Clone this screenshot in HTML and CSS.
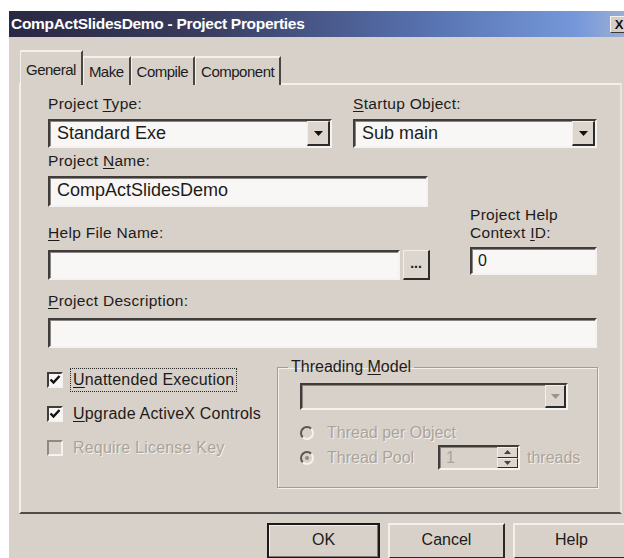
FILE: index.html
```html
<!DOCTYPE html>
<html lang="en">
<head>
<meta charset="utf-8">
<title>CompActSlidesDemo - Project Properties</title>
<link rel="stylesheet" href="styles.css">
</head>
<body>
<div class="dialog">
  <div class="titlebar">
    <span class="title">CompActSlidesDemo - Project Properties</span>
    <span class="close">X</span>
  </div>
  <div class="dialog-body">
    <div class="tabs">
      <div class="tab active">General</div>
      <div class="tab">Make</div>
      <div class="tab">Compile</div>
      <div class="tab">Component</div>
    </div>
    <div class="panel">
      <div class="row-top">
        <div class="field field-type">
          <div class="label">Project <u>T</u>ype:</div>
          <div class="combo">
            <span class="value">Standard Exe</span>
            <span class="drop"><svg width="9" height="5" viewBox="0 0 9 5"><path d="M0 0H9L4.5 5Z" fill="#111"/></svg></span>
          </div>
        </div>
        <div class="field field-startup">
          <div class="label"><u>S</u>tartup Object:</div>
          <div class="combo">
            <span class="value">Sub main</span>
            <span class="drop"><svg width="9" height="5" viewBox="0 0 9 5"><path d="M0 0H9L4.5 5Z" fill="#111"/></svg></span>
          </div>
        </div>
      </div>

      <div class="row-mid">
        <div class="col-left">
          <div class="label">Project <u>N</u>ame:</div>
          <div class="textbox name">CompActSlidesDemo</div>
          <div class="label help-label"><u>H</u>elp File Name:</div>
          <div class="file-row">
            <div class="textbox file"></div>
            <div class="browse">...</div>
          </div>
        </div>
        <div class="col-right">
          <div class="label">Project Help<br>Context <u>I</u>D:</div>
          <div class="textbox ctx">0</div>
        </div>
      </div>

      <div class="label desc-label"><u>P</u>roject Description:</div>
      <div class="textbox desc"></div>

      <div class="row-bottom">
        <div class="checks">
          <div class="check">
            <span class="box"><svg width="12" height="12" viewBox="0 0 12 12"><path d="M1.5 5.5L4.5 8.5L10.5 2" fill="none" stroke="#111" stroke-width="2.4"/></svg></span>
            <span class="check-text focus"><u>U</u>nattended Execution</span>
          </div>
          <div class="check">
            <span class="box"><svg width="12" height="12" viewBox="0 0 12 12"><path d="M1.5 5.5L4.5 8.5L10.5 2" fill="none" stroke="#111" stroke-width="2.4"/></svg></span>
            <span class="check-text"><u>U</u>pgrade ActiveX Controls</span>
          </div>
          <div class="check disabled">
            <span class="box"></span>
            <span class="check-text">Require License Key</span>
          </div>
        </div>

        <fieldset class="threading">
          <legend>Threading <u>M</u>odel</legend>
          <div class="combo combo-disabled">
            <span class="value"></span>
            <span class="drop"><svg width="9" height="5" viewBox="0 0 9 5"><path d="M0 0H9L4.5 5Z" fill="#9a948d"/></svg></span>
          </div>
          <div class="radio-row first">
            <span class="radio"></span>
            <span class="dis-text">Thread per Object</span>
          </div>
          <div class="radio-row">
            <span class="radio checked"><span class="dot"></span></span>
            <span class="dis-text pool">Thread Pool</span>
            <div class="spin">
              <span class="spin-value">1</span>
              <span class="spin-btns">
                <span class="spin-btn"><svg width="7" height="4" viewBox="0 0 7 4"><path d="M0 4H7L3.5 0Z" fill="#444"/></svg></span>
                <span class="spin-btn"><svg width="7" height="4" viewBox="0 0 7 4"><path d="M0 0H7L3.5 4Z" fill="#444"/></svg></span>
              </span>
            </div>
            <span class="dis-text">threads</span>
          </div>
        </fieldset>
      </div>
    </div>

    <div class="buttons">
      <div class="btn default">OK</div>
      <div class="btn">Cancel</div>
      <div class="btn">Help</div>
    </div>
  </div>
</div>
</body>
</html>
```

FILE: styles.css
```css
* {
  box-sizing: border-box;
}

html,
body {
  margin: 0;
  padding: 0;
  background: #ffffff;
  overflow: hidden;
}

body {
  width: 624px;
  height: 558px;
  font-family: "Liberation Sans", Arial, sans-serif;
  color: #1d1b1a;
}

u {
  text-decoration-thickness: 1px;
  text-underline-offset: 2px;
}

/* window frame */
.dialog {
  margin: 11px 0 0 9px;
  width: 631px;
  height: 560px;
  background: #d8d1c9;
}

.titlebar {
  height: 26px;
  display: flex;
  align-items: center;
  padding: 0 12px 0 2px;
  background: linear-gradient(to right, #2a2943 0%, #383b5c 30%, #5670ad 65%, #7598da 90%, #a7b6d2 100%);
}

.title {
  color: #ffffff;
  font-weight: bold;
  font-size: 15.5px;
  letter-spacing: -0.3px;
}

.close {
  margin-left: auto;
  width: 18px;
  height: 17px;
  background: #d4cec8;
  border: 1px solid;
  border-color: #f4f1ee #3a3836 #3a3836 #f4f1ee;
  font-weight: bold;
  font-size: 13px;
  line-height: 15px;
  text-align: center;
  color: #111;
}

.dialog-body {
  padding: 13px 0 0 10px;
}

/* tab strip */
.tabs {
  display: flex;
  align-items: flex-end;
  height: 35px;
  margin-bottom: -2px;
  padding-left: 1px;
}

.tab {
  height: 29px;
  padding: 5px 5px 0 5px;
  font-size: 15px;
  letter-spacing: -0.5px;
  border-top: 2px solid #f3efeb;
  border-left: 1px solid #f3efeb;
  border-right: 2px solid #4a4643;
  background: #d8d1c9;
}

.tab.active {
  height: 35px;
  padding-top: 9px;
  position: relative;
  z-index: 1;
}

/* tab page */
.panel {
  width: 603px;
  height: 431px;
  padding: 10px 0 0 27px;
  border-top: 2px solid #f3efeb;
  border-left: 2px solid #f3efeb;
  border-right: 2px solid #e9e4de;
  border-bottom: 2px solid #4f4b48;
}

.label {
  font-size: 15.5px;
  line-height: 18px;
  letter-spacing: 0.3px;
}

.row-top {
  display: flex;
  gap: 21px;
}

.field-type {
  width: 284px;
}

.field-startup {
  width: 244px;
}

.field .label {
  margin-bottom: 6px;
}

/* sunken controls */
.combo,
.textbox,
.spin {
  background: #f8f7f5;
  border: 2px solid;
  border-color: #3f3c3a #f5f2ef #f5f2ef #3f3c3a;
  box-shadow: inset 1px 1px 0 #8a8580;
}

.combo {
  height: 29px;
  display: flex;
  align-items: stretch;
  padding-left: 7px;
}

.combo .value {
  flex: 1;
  font-size: 18px;
  line-height: 25px;
}

.drop {
  width: 23px;
  display: flex;
  align-items: center;
  justify-content: center;
  background: #dcd6cf;
  border: 1px solid;
  border-color: #f2eeea #2e2c2a #2e2c2a #f2eeea;
  border-right-width: 2px;
  border-bottom-width: 2px;
}

.textbox {
  font-size: 18px;
  line-height: 25px;
  padding-left: 7px;
}

.row-mid {
  display: flex;
  align-items: flex-end;
  margin-top: 4px;
}

.col-left {
  width: 382px;
}

.textbox.name {
  margin-top: 6px;
  height: 31px;
  width: 380px;
}

.help-label {
  margin-top: 17px;
}

.file-row {
  display: flex;
  gap: 3px;
  margin-top: 8px;
}

.textbox.file {
  width: 352px;
  height: 30px;
}

.browse {
  width: 27px;
  height: 30px;
  background: #dcd6cf;
  border: 1px solid;
  border-color: #f2eeea #2e2c2a #2e2c2a #f2eeea;
  border-right-width: 2px;
  border-bottom-width: 2px;
  font-size: 14px;
  font-weight: bold;
  line-height: 24px;
  text-align: center;
}

.col-right {
  width: 127px;
  margin-left: 40px;
  margin-bottom: 5px;
}

.textbox.ctx {
  margin-top: 5px;
  height: 28px;
  font-size: 16px;
  line-height: 24px;
  padding-left: 6px;
}

.desc-label {
  margin-top: 12px;
}

.textbox.desc {
  margin-top: 8px;
  width: 549px;
  height: 30px;
}

/* check boxes and threading group */
.row-bottom {
  display: flex;
  margin-top: 10px;
}

.checks {
  width: 229px;
  padding-top: 10px;
  display: flex;
  flex-direction: column;
  gap: 10px;
  margin-left: -1px;
}

.check {
  display: flex;
  align-items: center;
  height: 24px;
  font-size: 16px;
  letter-spacing: 0.2px;
}

.box {
  width: 16px;
  height: 16px;
  margin-right: 10px;
  background: #f8f7f5;
  border: 2px solid;
  border-color: #3f3c3a #f5f2ef #f5f2ef #3f3c3a;
  display: flex;
  align-items: center;
  justify-content: center;
}

.check-text.focus {
  outline: 1px dotted #2a2826;
  outline-offset: 2px;
}

.check.disabled .box {
  background: #d8d1c9;
  border-color: #8d8882 #f5f2ef #f5f2ef #8d8882;
}

.check.disabled .check-text,
.dis-text {
  color: #aaa39b;
  text-shadow: 1px 1px 0 #f4f0ec;
}

.threading {
  width: 321px;
  height: 130px;
  margin: 0 0 0 1px;
  padding: 0 0 0 22px;
  border: 1px solid #a29c95;
  box-shadow: 1px 1px 0 #f4f0ec, inset 1px 1px 0 #f4f0ec;
}

.threading legend {
  margin-left: -12px;
  padding: 0 3px;
  font-size: 16px;
  line-height: 18px;
}

.combo-disabled {
  width: 268px;
  height: 27px;
  margin-top: 7px;
  background: #d8d1c9;
}

.combo-disabled .drop {
  width: 21px;
}

.radio-row {
  display: flex;
  align-items: center;
  height: 25px;
  font-size: 16px;
}

.radio-row.first {
  margin-top: 10px;
}

.radio {
  width: 14px;
  height: 14px;
  border-radius: 50%;
  border: 2px solid;
  border-color: #5a5652 #f5f2ef #f5f2ef #5a5652;
  background: #d8d1c9;
  margin-right: 13px;
  display: flex;
  align-items: center;
  justify-content: center;
}

.dot {
  width: 4px;
  height: 4px;
  border-radius: 50%;
  background: #8d8882;
}

.dis-text.pool {
  width: 111px;
}

.spin {
  width: 82px;
  height: 25px;
  display: flex;
  background: #d8d1c9;
  margin-right: 7px;
}

.spin-value {
  flex: 1;
  font-size: 16px;
  line-height: 21px;
  padding-left: 6px;
  color: #aaa39b;
}

.spin-btns {
  width: 21px;
  display: flex;
  flex-direction: column;
}

.spin-btn {
  flex: 1;
  display: flex;
  align-items: center;
  justify-content: center;
  background: #dcd6cf;
  border: 1px solid;
  border-color: #f2eeea #2e2c2a #2e2c2a #f2eeea;
}

/* command buttons */
.buttons {
  display: flex;
  justify-content: flex-end;
  gap: 8px;
  padding-right: 10px;
  margin-top: 9px;
}

.btn {
  width: 117px;
  height: 36px;
  font-size: 16px;
  line-height: 30px;
  text-align: center;
  background: #d8d1c9;
  border: 2px solid;
  border-color: #f3efeb #2a2826 #2a2826 #f3efeb;
}

.btn.default {
  width: 113px;
  border: 2px solid #1c1a19;
  box-shadow: inset -1px -1px 0 #7d7873, inset 1px 1px 0 #f3efeb;
}
```
